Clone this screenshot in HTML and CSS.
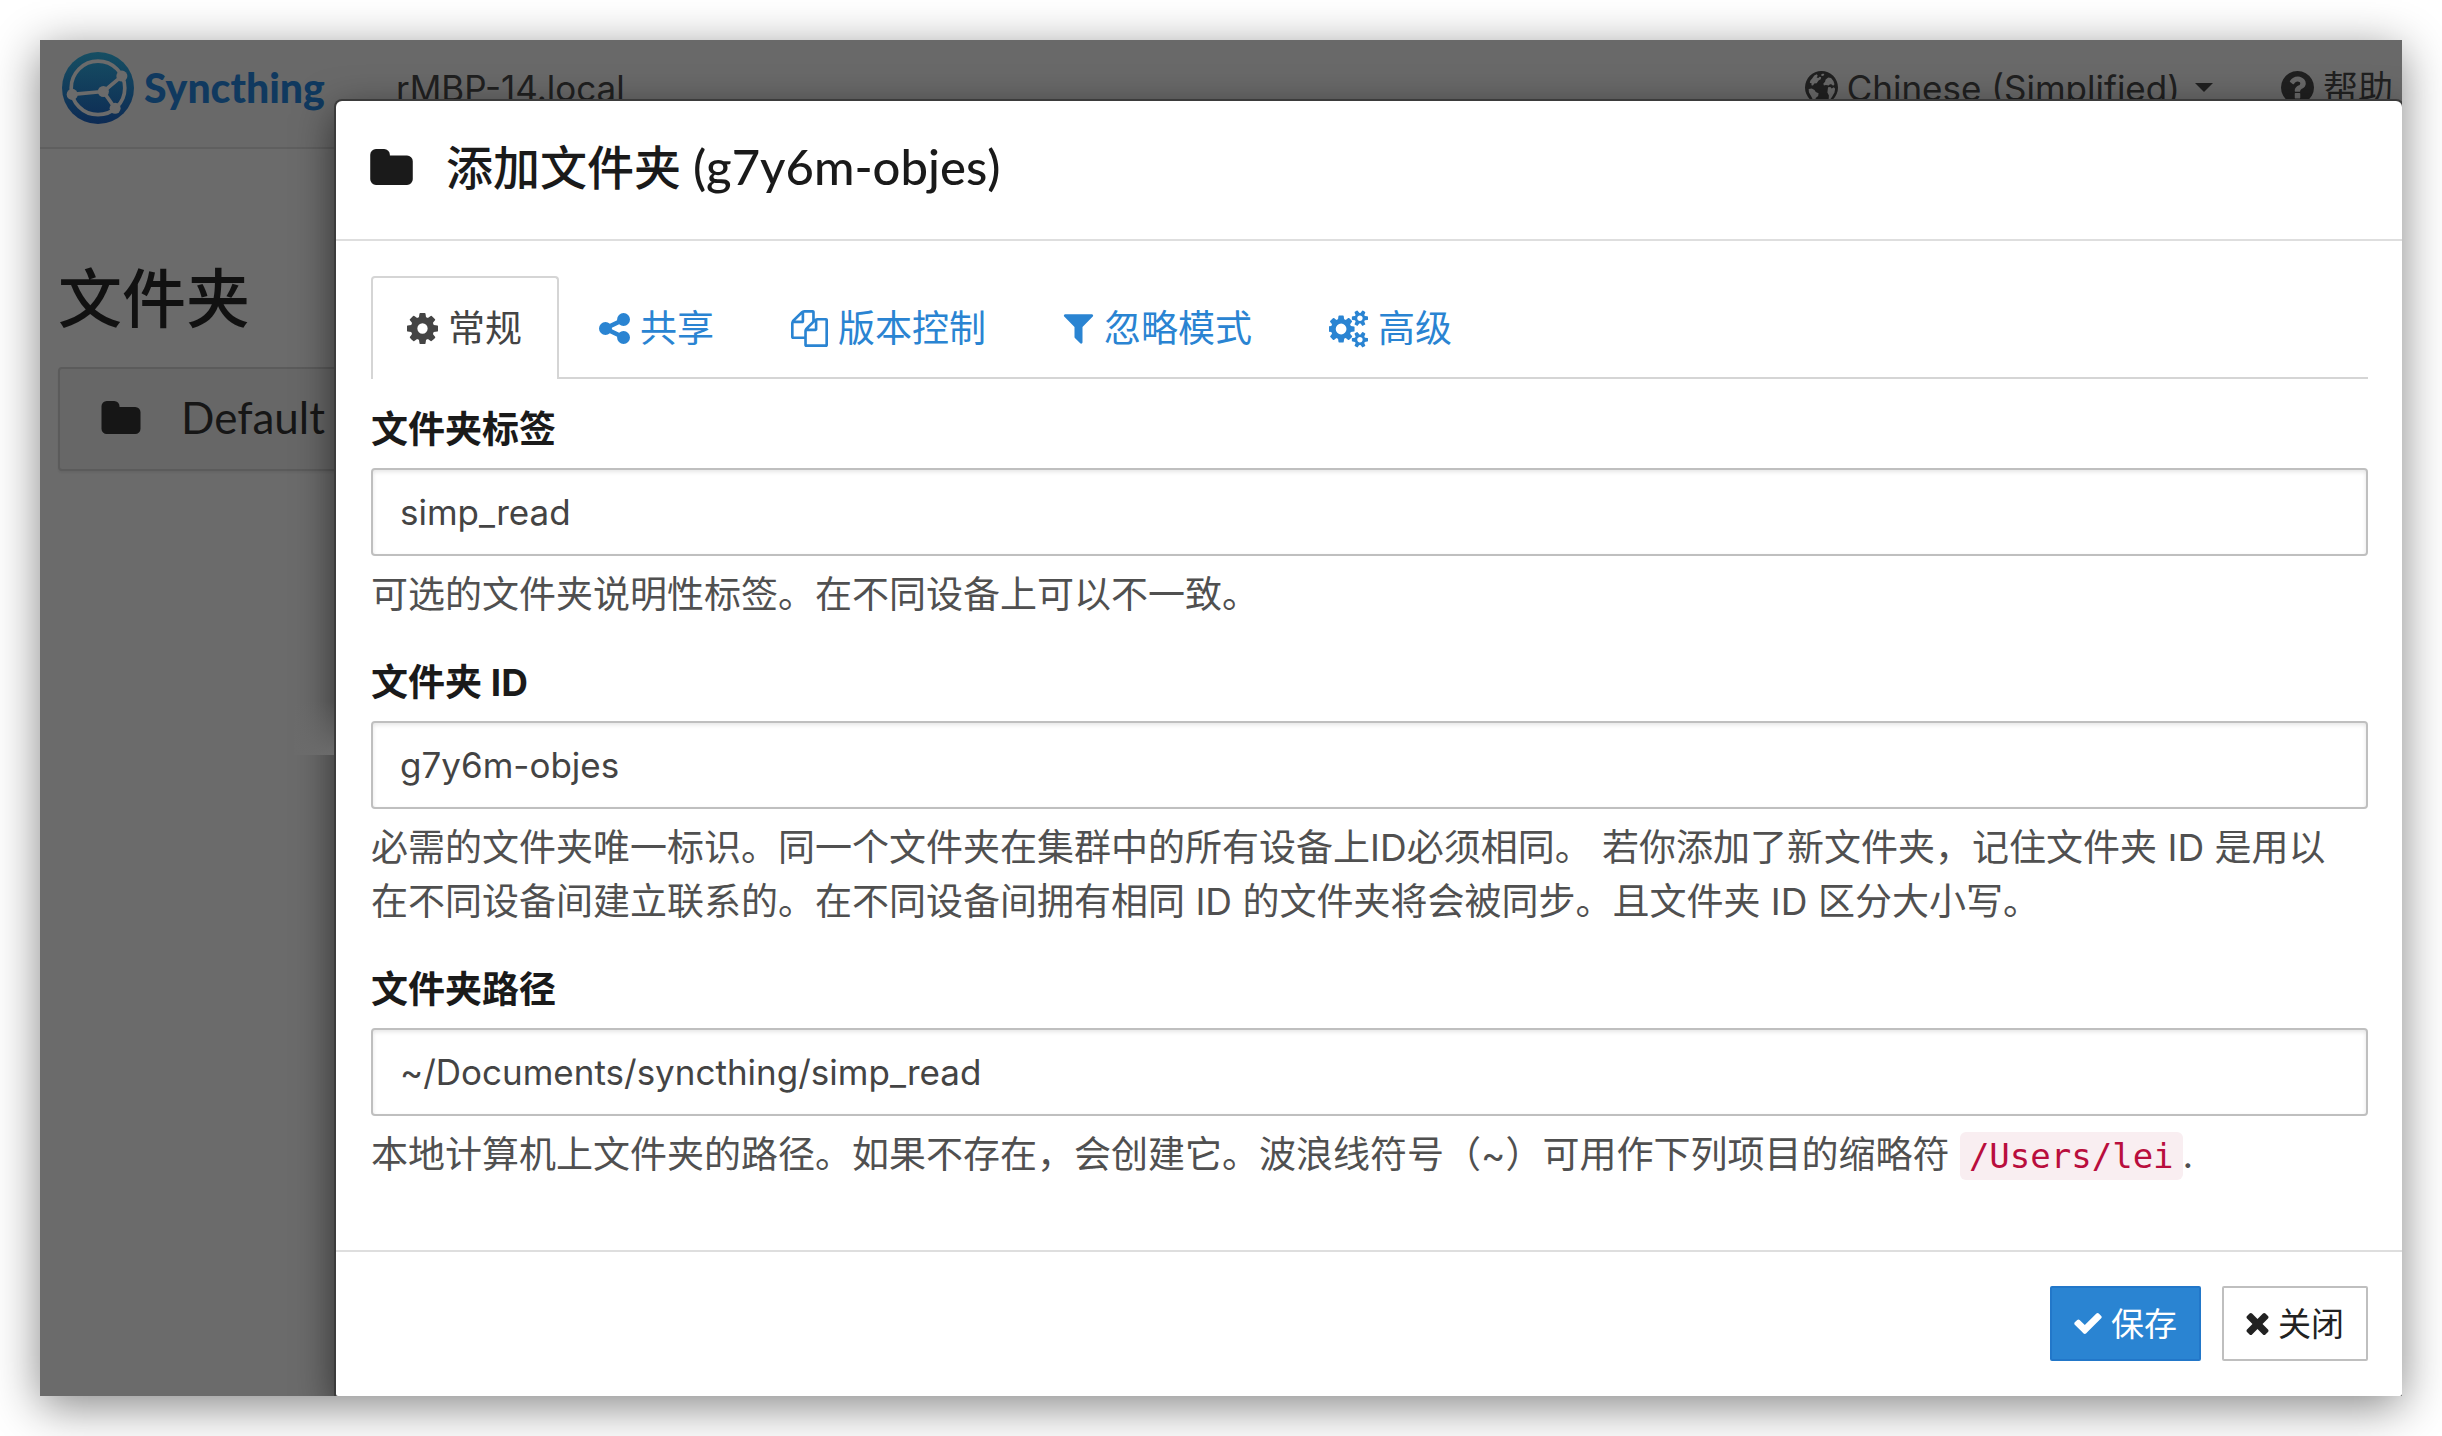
FILE: index.html
```html
<!DOCTYPE html>
<html lang="zh-CN">
<head>
<meta charset="utf-8">
<meta name="viewport" content="width=device-width, initial-scale=1">
<title>Syncthing - 添加文件夹</title>
<link rel="stylesheet" href="styles.css">
</head>
<body>
<div class="window">
  <div class="page">
    <nav class="navbar">
      <a class="brand" href="#">
        <svg class="brand-mark" viewBox="0 0 117.4 117.4" aria-hidden="true">
          <defs><linearGradient id="mark" x1="0" y1="0" x2="0" y2="1"><stop offset="0" stop-color="#164f63"/><stop offset="1" stop-color="#0d2b54"/></linearGradient></defs>
          <circle cx="58.7" cy="58.7" r="58.7" fill="url(#mark)"/>
          <g fill="none" stroke="#6b6b6b" stroke-width="6">
            <circle cx="58.7" cy="58.5" r="43.7"/>
            <path d="M97.6 39.4 67.5 64.4 86.5 91.8M16.6 69.1 67.5 64.4"/>
          </g>
          <g fill="#6b6b6b"><circle cx="97.6" cy="39.3" r="9"/><circle cx="86.6" cy="91.8" r="9"/><circle cx="67.5" cy="64.4" r="9"/><circle cx="16.6" cy="69.1" r="9"/></g>
        </svg>
        <span class="brand-name">Syncthing</span>
      </a>
      <span class="host">rMBP-14.local</span>
      <a class="nav-item nav-language" href="#">
        <svg class="icon icon-round" viewBox="128 128 1536 1536" aria-hidden="true"><path fill-rule="evenodd" d="M896 128a768 768 0 1 0 0 1536 768 768 0 1 0 0-1536zM560 340l120-60 40 70-50 80 80 20 60-60 70 30-20 90-100 60-90 130-110 10-60 90-80-10 20-80-90-30 30-110 90-110zM880 290l90-50 60 50-60 70-80-10zM1090 520l120-90 130 20 110 140 50 160-60 60-90-60-60-10-60 60-130-20-90 20-30-80 80-90zM1200 880l110-10 60 70 100-50 60 60-30 180-110 200-90 120-70-20 10-160-70-140zM300 960l140-20 130 70 60 90 130 60-20 130-110 100-40 130-70-10-100-200-110-190z"/></svg>
        <span>Chinese (Simplified)</span>
        <svg class="caret" viewBox="0 0 18 9" aria-hidden="true"><path d="M0 0h18L9 9z"/></svg>
      </a>
      <a class="nav-item" href="#">
        <svg class="icon icon-round" viewBox="128 128 1536 1536" aria-hidden="true"><path d="M1024 1376v-192q0-14-9-23t-23-9h-192q-14 0-23 9t-9 23v192q0 14 9 23t23 9h192q14 0 23-9t9-23zm256-672q0-88-55.5-163t-138.5-116-170-41q-243 0-371 213-15 24 8 42l132 100q7 6 19 6 16 0 25-12 53-68 86-92 34-24 86-24 48 0 85.5 26t37.5 59q0 38-20 61t-68 45q-63 28-115.5 86.5t-52.5 125.5v36q0 14 9 23t23 9h192q14 0 23-9t9-23q0-19 21.5-49.5t54.5-49.5q32-18 49-28.5t46-35 44.5-48 28-60.5 12.5-81zm384 192q0 209-103 385.5t-279.5 279.5-385.5 103-385.5-103-279.5-279.5-103-385.5 103-385.5 279.5-279.5 385.5-103 385.5 103 279.5 279.5 103 385.5z"/></svg>
        <span>帮助</span>
      </a>
    </nav>
    <main class="folders">
      <h3 class="folders-title">文件夹</h3>
      <button class="panel" type="button">
        <svg class="icon panel-icon" viewBox="64 128 1664 1408" aria-hidden="true"><path d="M1728 608v704q0 92-66 158t-158 66h-1216q-92 0-158-66t-66-158v-960q0-92 66-158t158-66h320q92 0 158 66t66 158v32h672q92 0 158 66t66 158z"/></svg>
        <span>Default</span>
      </button>
    </main>
  </div>

  <form class="modal" role="dialog" aria-labelledby="modal-title">
    <header class="modal-header">
      <svg class="icon title-icon" viewBox="64 128 1664 1408" aria-hidden="true"><path d="M1728 608v704q0 92-66 158t-158 66h-1216q-92 0-158-66t-66-158v-960q0-92 66-158t158-66h320q92 0 158 66t66 158v32h672q92 0 158 66t66 158z"/></svg>
      <h4 class="modal-title" id="modal-title">添加文件夹 <span class="title-id">(g7y6m-objes)</span></h4>
    </header>
    <div class="modal-body">
      <ul class="tabs">
        <li><a class="tab tab-active" href="#general">
          <svg class="icon icon-cog" viewBox="128 128 1536 1536" aria-hidden="true"><path d="M1152 896q0-106-75-181t-181-75-181 75-75 181 75 181 181 75 181-75 75-181zm512-109v222q0 12-8 23t-20 13l-185 28q-19 54-39 91 35 50 107 138 10 12 10 25t-9 23q-27 37-99 108t-94 71q-12 0-26-9l-138-108q-44 23-91 38-16 136-29 186-7 28-36 28h-222q-14 0-24.5-8.5t-11.5-21.5l-28-184q-49-16-90-37l-141 107q-10 9-25 9-14 0-25-11-126-114-165-168-7-10-7-23 0-12 8-23 15-21 51-66.5t54-70.5q-27-50-41-99l-183-27q-13-2-21-12.5t-8-23.5v-222q0-12 8-23t19-13l186-28q14-46 39-92-40-57-107-138-10-12-10-24 0-10 9-23 26-36 98.5-107.5t94.5-71.5q13 0 26 10l138 107q44-23 91-38 16-136 29-186 7-28 36-28h222q14 0 24.5 8.5t11.5 21.5l28 184q49 16 90 37l142-107q9-9 24-9 13 0 25 10 129 119 165 170 7 8 7 22 0 12-8 23-15 21-51 66.5t-54 70.5q26 50 41 98l183 28q13 2 21 12.5t8 23.5z"/></svg>
          <span>常规</span></a></li>
        <li><a class="tab" href="#sharing">
          <svg class="icon icon-share" viewBox="128 128 1536 1536" aria-hidden="true"><path d="M1344 1024q133 0 226.5 93.5t93.5 226.5-93.5 226.5-226.5 93.5-226.5-93.5-93.5-226.5q0-12 2-34l-360-180q-92 86-218 86-133 0-226.5-93.5t-93.5-226.5 93.5-226.5 226.5-93.5q126 0 218 86l360-180q-2-22-2-34 0-133 93.5-226.5t226.5-93.5 226.5 93.5 93.5 226.5-93.5 226.5-226.5 93.5q-126 0-218-86l-360 180q2 22 2 34t-2 34l360 180q92-86 218-86z"/></svg>
          <span>共享</span></a></li>
        <li><a class="tab" href="#versioning">
          <svg class="icon icon-files" viewBox="0 0 1792 1792" aria-hidden="true"><path d="M1696 384q40 0 68 28t28 68v1216q0 40-28 68t-68 28h-960q-40 0-68-28t-28-68v-288h-544q-40 0-68-28t-28-68v-672q0-40 20-88t48-76l408-408q28-28 76-48t88-20h416q40 0 68 28t28 68v328q68-40 128-40h416zm-544 213l-299 299h299v-299zm-640-384l-299 299h299v-299zm196 647l316-316v-416h-384v416q0 40-28 68t-68 28h-416v640h512v-256q0-40 20-88t48-76zm956 804v-1152h-384v416q0 40-28 68t-68 28h-416v640h896z"/></svg>
          <span>版本控制</span></a></li>
        <li><a class="tab" href="#ignores">
          <svg class="icon icon-filter" viewBox="192 192 1408 1536" aria-hidden="true"><path d="M1595 295q17 41-14 70l-493 493v742q0 42-39 59-13 5-25 5-27 0-45-19l-256-256q-19-19-19-45v-486l-493-493q-31-29-14-70 17-39 59-39h1280q42 0 59 39z"/></svg>
          <span>忽略模式</span></a></li>
        <li><a class="tab" href="#advanced">
          <svg class="icon icon-cogs" viewBox="0 0 1856 1792" aria-hidden="true"><path d="M832 896q0-106-75-181t-181-75-181 75-75 181 75 181 181 75 181-75 75-181zm768 512q0-52-38-90t-90-38-90 38-38 90q0 53 37.5 90.5t90.5 37.5 90.5-37.5 37.5-90.5zm0-1024q0-52-38-90t-90-38-90 38-38 90q0 53 37.5 90.5t90.5 37.5 90.5-37.5 37.5-90.5zm-384 421v185q0 10-7 19.5t-16 10.5l-155 24q-11 35-32 76 34 48 90 115 7 11 7 20 0 12-7 19-23 30-82.5 89.5t-78.5 59.5q-11 0-21-7l-115-90q-37 19-77 31-11 108-23 155-7 24-30 24h-186q-11 0-20-7.5t-10-17.5l-23-153q-34-10-75-31l-118 89q-7 7-20 7-11 0-21-8-144-133-144-160 0-9 7-19 10-14 41-53t47-61q-23-44-35-82l-152-24q-10-1-17-9.5t-7-19.5v-185q0-10 7-19.5t16-10.5l155-24q11-35 32-76-34-48-90-115-7-11-7-20 0-12 7-20 22-30 82-89t79-59q11 0 21 7l115 90q34-18 77-32 11-108 23-154 7-24 30-24h186q11 0 20 7.5t10 17.5l23 153q34 10 75 31l118-89q8-7 20-7 11 0 21 8 144 133 144 160 0 8-7 19-12 16-42 54t-45 60q23 48 34 82l152 23q10 2 17 10.5t7 19.5zm640 533v140q0 16-149 31-12 27-30 52 51 113 51 138 0 4-4 7-122 71-124 71-8 0-46-47t-52-68q-20 2-30 2t-30-2q-14 21-52 68t-46 47q-2 0-124-71-4-3-4-7 0-25 51-138-18-25-30-52-149-15-149-31v-140q0-16 149-31 13-29 30-52-51-113-51-138 0-4 4-7 4-2 35-20t59-34 30-16q8 0 46 46.5t52 67.5q20-2 30-2t30 2q51-71 92-112l6-2q4 0 124 70 4 3 4 7 0 25-51 138 17 23 30 52 149 15 149 31zm0-1024v140q0 16-149 31-12 27-30 52 51 113 51 138 0 4-4 7-122 71-124 71-8 0-46-47t-52-68q-20 2-30 2t-30-2q-14 21-52 68t-46 47q-2 0-124-71-4-3-4-7 0-25 51-138-18-25-30-52-149-15-149-31v-140q0-16 149-31 13-29 30-52-51-113-51-138 0-4 4-7 4-2 35-20t59-34 30-16q8 0 46 46.5t52 67.5q20-2 30-2t30 2q51-71 92-112l6-2q4 0 124 70 4 3 4 7 0 25-51 138 17 23 30 52 149 15 149 31z"/></svg>
          <span>高级</span></a></li>
      </ul>
      <div class="fields" id="general">
        <div class="field">
          <label for="folder-label">文件夹标签</label>
          <input id="folder-label" type="text" value="simp_read">
          <p class="help">可选的文件夹说明性标签。在不同设备上可以不一致。</p>
        </div>
        <div class="field">
          <label for="folder-id">文件夹 ID</label>
          <input id="folder-id" type="text" value="g7y6m-objes">
          <p class="help">必需的文件夹唯一标识。同一个文件夹在集群中的所有设备上ID必须相同。 若你添加了新文件夹，记住文件夹 ID 是用以在不同设备间建立联系的。在不同设备间拥有相同 ID 的文件夹将会被同步。且文件夹 ID 区分大小写。</p>
        </div>
        <div class="field">
          <label for="folder-path">文件夹路径</label>
          <input id="folder-path" type="text" value="~/Documents/syncthing/simp_read">
          <p class="help">本地计算机上文件夹的路径。如果不存在，会创建它。波浪线符号（~）可用作下列项目的缩略符 <code>/Users/lei</code>.</p>
        </div>
      </div>
    </div>
    <footer class="modal-footer">
      <button class="btn btn-primary" type="submit">
        <svg class="icon icon-check" viewBox="121 334 1550 1188" aria-hidden="true"><path d="M1671 566q0 40-28 68l-724 724-136 136q-28 28-68 28t-68-28l-136-136-362-362q-28-28-28-68t28-68l136-136q28-28 68-28t68 28l294 295 656-657q28-28 68-28t68 28l136 136q28 28 28 68z"/></svg>
        <span>保存</span>
      </button>
      <button class="btn" type="button">
        <svg class="icon icon-times" viewBox="302 366 1188 1188" aria-hidden="true"><path d="M1490 1322q0 40-28 68l-136 136q-28 28-68 28t-68-28l-294-294-294 294q-28 28-68 28t-68-28l-136-136q-28-28-28-68t28-68l294-294-294-294q-28-28-28-68t28-68l136-136q28-28 68-28t68 28l294 294 294-294q28-28 68-28t68 28l136 136q28 28 28 68t-28 68l-294 294 294 294q28 28 28 68z"/></svg>
        <span>关闭</span>
      </button>
    </footer>
  </form>
</div>
</body>
</html>
```
FILE: styles.css
```css
*,
*::before,
*::after {
  box-sizing: border-box;
}

body {
  margin: 0;
  padding: 40px;
  background: #fff;
  color: #444;
  font-family: Inter, "Noto Sans CJK SC", sans-serif;
  font-size: 37px;
  line-height: 54px;
}

h3,
h4,
p,
ul {
  margin: 0;
  padding: 0;
}

a {
  text-decoration: none;
}

button,
input {
  font: inherit;
}

.icon,
.caret {
  flex: none;
  fill: currentColor;
}

/* The dialog is stacked over the dimmed page in one grid cell. */
.window {
  display: grid;
  min-height: calc(100vh - 80px);
  overflow: hidden;
  background: #6b6b6b;
  box-shadow: 0 10px 44px rgba(0, 0, 0, 0.48);
}

.page,
.modal {
  grid-area: 1 / 1;
  min-width: 0;
}

/* Dimmed page */
.navbar {
  display: flex;
  align-items: center;
  height: 109px;
  padding: 0 9px 12px 22px;
  border-bottom: 2px solid #5f5f5f;
  background: #696969;
  color: #202020;
  font-size: 35px;
}

.brand {
  display: flex;
  align-items: center;
  gap: 10px;
  color: #10395f;
}

.brand-mark {
  width: 72px;
  height: 74px;
}

.brand-name {
  font-family: Lato, sans-serif;
  font-size: 41px;
  font-weight: 900;
}

.host {
  margin-left: 71px;
}

.nav-item {
  display: flex;
  align-items: center;
  gap: 9px;
  color: inherit;
}

.nav-language {
  margin: 0 68px 0 auto;
}

.icon-round {
  width: 33px;
  height: 33px;
}

.caret {
  width: 18px;
  height: 9px;
  margin-left: 6px;
}

.folders {
  padding: 106px 18px 0;
  color: #111;
}

.folders-title {
  margin-bottom: 24px;
  font-size: 64px;
  font-weight: 500;
  line-height: 88px;
}

.panel {
  display: flex;
  align-items: center;
  gap: 40px;
  width: 100%;
  height: 104px;
  padding: 0 41px 4px;
  border: 2px solid #5b5b5b;
  border-radius: 4px;
  background: #676767;
  box-shadow: 0 2px 2px rgba(0, 0, 0, 0.05);
  color: #161616;
  font-family: Lato, sans-serif;
  font-size: 44px;
}

.panel-icon {
  width: 40px;
  height: 33px;
}

/* Dialog */
.modal {
  position: relative;
  margin: 61px 0 0 296px;
  border-radius: 6px 6px 2px 2px;
  background: #fff;
  box-shadow: 0 0 0 2px #3b3b3b, 0 12px 40px rgba(0, 0, 0, 0.6);
}

/* Break in the dialog's side shadow */
.modal::before {
  position: absolute;
  top: 600px;
  left: -42px;
  width: 40px;
  height: 54px;
  background: linear-gradient(transparent, #6b6b6b);
  content: "";
}

.modal-header {
  display: flex;
  align-items: center;
  gap: 33px;
  padding: 34px 34px 40px;
  border-bottom: 2px solid #dedede;
  color: #1a1a1a;
}

.title-icon {
  width: 43px;
  height: 36px;
}

.modal-title {
  font-family: Lato, "Noto Sans CJK SC", sans-serif;
  font-size: 47px;
  font-weight: 500;
  line-height: 64px;
}

.title-id {
  font-size: 49px;
  line-height: 1;
}

.modal-body {
  padding: 35px 34px 34px 35px;
}

.tabs {
  display: flex;
  gap: 4px;
  border-bottom: 2px solid #d5d5d5;
  list-style: none;
}

.tab {
  display: flex;
  align-items: center;
  gap: 10px;
  height: 103px;
  margin-bottom: -2px;
  padding: 0 35px 0 34px;
  border: 2px solid transparent;
  border-bottom: 0;
  color: #2a84d2;
}

.tab-active {
  border-color: #d5d5d5;
  border-radius: 4px 4px 0 0;
  background: #fff;
  color: #444;
}

.icon-cog,
.icon-share {
  width: 31px;
  height: 31px;
}

.icon-files {
  width: 37px;
  height: 37px;
}

.icon-filter {
  width: 31px;
  height: 32px;
}

.icon-cogs {
  width: 39px;
  height: 38px;
}

.fields {
  display: grid;
  gap: 34px;
  padding: 24px 0 34px;
}

.field {
  display: grid;
  gap: 11px;
}

.field label {
  color: #1a1a1a;
  font-weight: 700;
}

.field input {
  width: 100%;
  height: 88px;
  padding: 0 27px;
  border: 2px solid #bfbfbf;
  border-radius: 4px;
  background: #fff;
  box-shadow: inset 0 2px 4px rgba(0, 0, 0, 0.1);
  color: #444;
  font-size: 35px;
}

.help {
  padding: 1px 20px 0 0;
  color: #505050;
}

code {
  padding: 4px 9px;
  border-radius: 6px;
  background: #f9eef1;
  color: #b90e3d;
  font-family: "DejaVu Sans Mono", monospace;
  font-size: 34px;
  line-height: 1;
}

.modal-footer {
  display: flex;
  justify-content: flex-end;
  gap: 21px;
  padding: 34px;
  border-top: 2px solid #dedede;
}

.btn {
  display: flex;
  align-items: center;
  gap: 9px;
  height: 75px;
  padding: 0 22px;
  border: 2px solid #bfbfbf;
  border-radius: 2px;
  background: #fff;
  color: #222;
  font-size: 33px;
}

.btn-primary {
  border-color: #2277c9;
  background: #2a84d2;
  color: #fff;
}

.icon-check {
  width: 28px;
  height: 21px;
}

.icon-times {
  width: 23px;
  height: 22px;
}
```
